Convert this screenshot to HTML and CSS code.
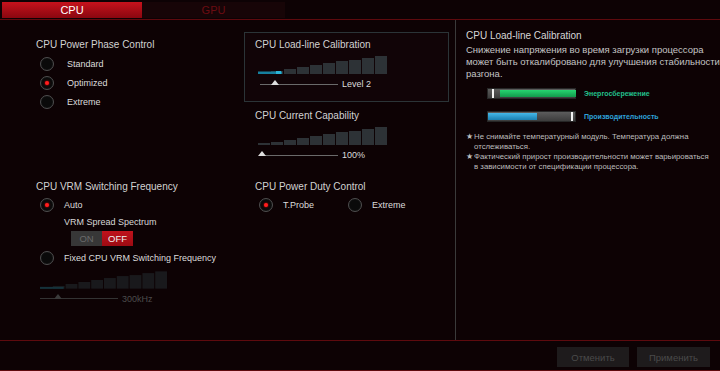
FILE: index.html
```html
<!DOCTYPE html>
<html lang="ru">
<head>
    <meta charset="UTF-8">
    <meta name="viewport" content="width=device-width, initial-scale=1.0">
    <link rel="stylesheet" href="styles.css">
</head>
<body>
<svg class="defs" width="0" height="0">
    <symbol id="ramp" viewBox="0 0 130 18">
        <rect x="0" y="16" width="12" height="2"/>
        <rect x="13" y="15" width="12" height="3"/>
        <rect x="26" y="13" width="12" height="5"/>
        <rect x="39" y="11" width="12" height="7"/>
        <rect x="52" y="9" width="12" height="9"/>
        <rect x="65" y="7" width="12" height="11"/>
        <rect x="78" y="5" width="12" height="13"/>
        <rect x="91" y="4" width="12" height="14"/>
        <rect x="104" y="2" width="12" height="16"/>
        <rect x="117" y="0" width="12" height="18"/>
    </symbol>
</svg>

<div class="tabs">
    <div class="tab tab-active">CPU</div>
    <div class="tab">GPU</div>
</div>

<div class="main">
    <div class="settings">
        <div class="group group-phase">
            <p class="group-title">CPU Power Phase Control</p>
            <div class="option-list">
                <div class="option"><span class="radio"></span>Standard</div>
                <div class="option"><span class="radio radio-on"></span>Optimized</div>
                <div class="option"><span class="radio"></span>Extreme</div>
            </div>
        </div>

        <div class="group group-llc">
            <div class="llc-box">
                <p class="group-title">CPU Load-line Calibration</p>
                <svg class="ramp" viewBox="0 0 130 18">
                    <use href="#ramp"/>
                    <rect class="ramp-glow" x="0" y="15.5" width="24" height="2.5"/>
                    <rect class="ramp-dot" x="18" y="15" width="5" height="3"/>
                </svg>
                <div class="slider">
                    <div class="track"><span class="thumb" style="left: 11px"></span></div>
                    Level 2
                </div>
            </div>
            <div class="cap">
                <p class="group-title">CPU Current Capability</p>
                <svg class="ramp" viewBox="0 0 130 18"><use href="#ramp"/></svg>
                <div class="slider">
                    <div class="track"><span class="thumb" style="left: -2px"></span></div>
                    100%
                </div>
            </div>
        </div>

        <div class="group group-vrm">
            <p class="group-title">CPU VRM Switching Frequency</p>
            <div class="option option-first"><span class="radio radio-on"></span>Auto</div>
            <p class="sub">VRM Spread Spectrum</p>
            <div class="toggle">
                <span class="toggle-off">ON</span>
                <span class="toggle-on">OFF</span>
            </div>
            <div class="option option-fixed"><span class="radio"></span>Fixed CPU VRM Switching Frequency</div>
            <svg class="ramp ramp-dim" viewBox="0 0 130 18">
                <use href="#ramp"/>
                <rect class="ramp-glow-dim" x="0" y="16" width="24" height="2"/>
            </svg>
            <div class="slider slider-dim">
                <div class="track"><span class="thumb" style="left: 14px"></span></div>
                300kHz
            </div>
        </div>

        <div class="group group-duty">
            <p class="group-title">CPU Power Duty Control</p>
            <div class="option-row">
                <div class="option option-wide"><span class="radio radio-on"></span>T.Probe</div>
                <div class="option"><span class="radio"></span>Extreme</div>
            </div>
        </div>
    </div>

    <div class="info">
        <p class="info-title">CPU Load-line Calibration</p>
        <p class="info-text">Снижение напряжения во время загрузки процессора<br>может быть откалибровано для улучшения стабильности<br>разгона.</p>

        <div class="meter-row meter-first">
            <div class="meter">
                <span class="meter-fill fill-green" style="left: 12px; width: 76px"></span>
                <span class="meter-mark" style="left: 4px"></span>
            </div>
            <span class="meter-label label-green">Энергосбережение</span>
        </div>
        <div class="meter-row">
            <div class="meter">
                <span class="meter-fill fill-blue" style="left: 0; width: 49px"></span>
                <span class="meter-mark" style="left: 83px"></span>
            </div>
            <span class="meter-label label-blue">Производительность</span>
        </div>

        <div class="notes">
            <div class="note"><span class="star">★</span><span>Не снимайте температурный модуль. Температура должна<br>отслеживаться.</span></div>
            <div class="note"><span class="star">★</span><span>Фактический прирост производительности может варьироваться<br>в зависимости от спецификации процессора.</span></div>
        </div>
    </div>
</div>

<div class="footer">
    <button class="btn">Отменить</button>
    <button class="btn btn-apply">Применить</button>
</div>
</body>
</html>
```

FILE: styles.css
```css
* {
    box-sizing: border-box;
}

body {
    margin: 0;
    width: 720px;
    height: 371px;
    overflow: hidden;
    background-color: #0d0204;
    font-family: "Liberation Sans", Arial, sans-serif;
    color: #d4d4d4;
}

p {
    margin: 0;
}

.defs {
    position: absolute;
}

/* Tabs */
.tabs {
    height: 20px;
    padding: 2px 0 0 2px;
    display: flex;
    border-bottom: 1px solid #5e0a0e;
}

.tab {
    width: 143px;
    height: 16px;
    line-height: 16px;
    text-align: center;
    font-size: 11px;
    color: #6b0c12;
    background-color: #170507;
}

.tab-active {
    width: 140px;
    color: #ffffff;
    background: linear-gradient(#c6121c, #8a0710);
}

/* Main area */
.main {
    height: 321px;
    display: flex;
    border-bottom: 1px solid #5e0a0e;
}

.settings {
    width: 455px;
    display: grid;
    grid-template-columns: 244px 205px;
    grid-template-rows: 155px 1fr;
}

.group-title {
    font-size: 10px;
    line-height: 12px;
    color: #d2d2d2;
}

.group-phase {
    padding: 19px 0 0 36px;
}

.option-list {
    margin-top: 3px;
}

.option {
    display: flex;
    align-items: center;
    height: 19px;
    font-size: 9px;
    color: #dcdcdc;
}

.radio {
    width: 14px;
    height: 14px;
    margin: 0 13px 0 4px;
    border-radius: 50%;
    border: 1px solid #4e4e4e;
    background: radial-gradient(#0a0a0a 55%, #1c1c1c);
    display: flex;
    align-items: center;
    justify-content: center;
}

.radio-on::after {
    content: "";
    width: 4px;
    height: 4px;
    border-radius: 50%;
    background-color: #ff1e1e;
    box-shadow: 0 0 2px #ff0000;
}

/* Load-line / current capability */
.group-llc {
    padding-top: 12px;
}

.llc-box {
    height: 70px;
    padding: 6px 0 0 10px;
    border: 1px solid #2b3437;
    background-color: #110407;
}

.ramp {
    display: block;
    width: 130px;
    height: 18px;
    margin: 5px 0 0 3px;
    fill: #2d3236;
}

.ramp-glow {
    fill: #16809e;
}

.ramp-dot {
    fill: #2bb4d6;
}

.slider {
    display: flex;
    align-items: center;
    height: 12px;
    margin-top: 4px;
    font-size: 9px;
    color: #dcdcdc;
}

.track {
    position: relative;
    width: 78px;
    height: 1px;
    margin: 0 4px 0 5px;
    background-color: #6a6a6a;
}

.thumb {
    position: absolute;
    top: -4px;
    width: 0;
    height: 0;
    border-left: 4px solid transparent;
    border-right: 4px solid transparent;
    border-bottom: 5px solid #dedede;
}

.cap {
    margin-top: 8px;
    padding-left: 11px;
}

/* VRM frequency */
.group-vrm {
    padding: 6px 0 0 36px;
}

.group-vrm .radio {
    margin-right: 10px;
}

.option-first {
    margin-top: 2px;
}

.sub {
    margin: 2px 0 0 28px;
    font-size: 9px;
    line-height: 12px;
    color: #d8d8d8;
}

.toggle {
    display: flex;
    width: 62px;
    height: 15px;
    margin: 3px 0 0 35px;
    font-size: 9.5px;
    line-height: 15px;
    text-align: center;
}

.toggle-off {
    width: 31px;
    background-color: #373737;
    color: #6a6a6a;
}

.toggle-on {
    width: 31px;
    background: linear-gradient(#c0121b, #9c0b13);
    color: #eeeeee;
}

.option-fixed {
    margin-top: 2.5px;
}

.ramp-dim {
    width: 128px;
    margin: 3px 0 0 4px;
    fill: #19191c;
}

.ramp-glow-dim {
    fill: #15323b;
}

.slider-dim {
    color: #4c4c4c;
}

.slider-dim .track {
    margin-left: 4px;
    background-color: #333333;
}

.slider-dim .thumb {
    border-bottom-color: #3a3a3a;
}

/* Power duty */
.group-duty {
    padding: 6px 0 0 11px;
}

.group-duty .radio {
    margin-right: 10px;
}

.option-row {
    display: flex;
    margin-top: 2px;
}

.option-wide {
    width: 89px;
}

/* Info panel */
.info {
    flex: 1;
    padding: 10px 0 0 10px;
    border-left: 1px solid #3a3a3a;
    white-space: nowrap;
}

.info-title {
    font-size: 10px;
    line-height: 12px;
    color: #d6d6d6;
}

.info-text {
    margin-top: 2px;
    font-size: 9.5px;
    line-height: 12px;
    color: #c4c4c4;
}

.meter-row {
    display: flex;
    align-items: center;
    margin: 12px 0 0 21px;
}

.meter-first {
    margin-top: 8px;
}

.meter {
    position: relative;
    width: 89px;
    height: 11px;
    border: 1px solid #262626;
    background: linear-gradient(#5c5c5c, #3c3c3c);
}

.meter-fill {
    position: absolute;
    top: 1px;
    bottom: 1px;
}

.fill-green {
    background: linear-gradient(#27d470, #119a4c);
}

.fill-blue {
    background: linear-gradient(#45b8e8, #1a7fb0);
}

.meter-mark {
    position: absolute;
    top: 0;
    bottom: 0;
    width: 2px;
    background-color: #f2f2f2;
}

.meter-label {
    margin-left: 8px;
    font-size: 7px;
    font-weight: bold;
}

.label-green {
    color: #22c08c;
}

.label-blue {
    color: #2ea2da;
}

.notes {
    margin-top: 10px;
}

.note {
    display: flex;
    font-size: 7.8px;
    line-height: 10px;
    color: #bdbdbd;
}

.star {
    width: 8px;
    flex-shrink: 0;
}

/* Footer */
.footer {
    height: 30px;
    padding: 6px 10px 0 0;
    display: flex;
    justify-content: flex-end;
    align-items: flex-start;
    gap: 8px;
    border-bottom: 1px solid #5e0a0e;
}

.btn {
    width: 72px;
    height: 20px;
    padding: 0;
    border: none;
    background-color: #1e1b1c;
    color: #4a4a4a;
    font-family: "Liberation Sans", Arial, sans-serif;
    font-size: 9.5px;
}

.btn-apply {
    width: 73px;
}
```
